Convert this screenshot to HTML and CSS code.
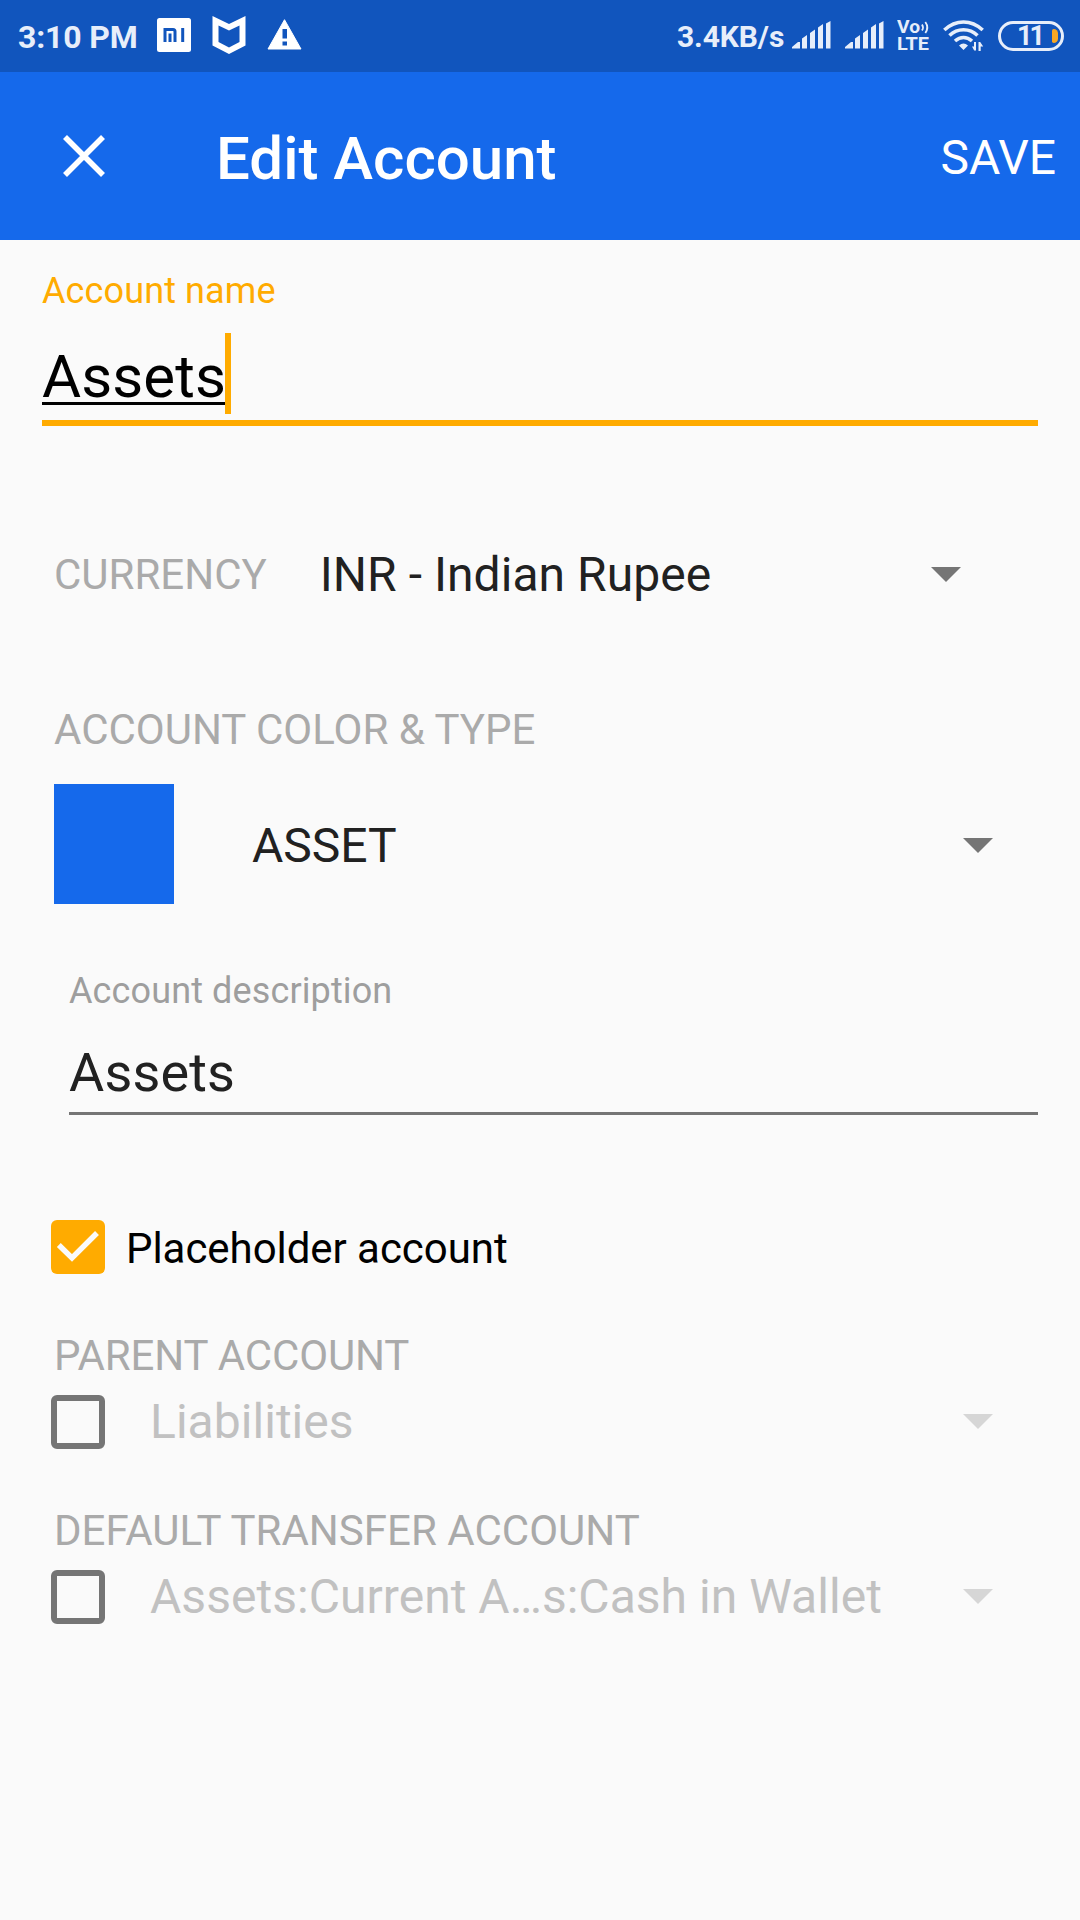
FILE: index.html
```html
<!DOCTYPE html>
<html lang="en">
<head>
<meta charset="utf-8">
<title>Edit Account</title>
<link rel="stylesheet" href="styles.css">
</head>
<body>
<div class="status">
  <span class="time">3:10 PM</span>
  <svg class="ic-mi" width="34" height="34" viewBox="0 0 34 34"><rect width="34" height="34" rx="2.5" fill="#fff"/><path d="M8 24V11.500h8q2 0 2 2V24M13 15.500V24M25.700 10v14" fill="none" stroke="#1155bd" stroke-width="3"/></svg>
  <svg class="ic-shield" width="34" height="39" viewBox="0 0 34 39"><path fill-rule="evenodd" fill="#fff" d="M.5 0 17 8 33.500 0v29.500L17 38 .500 29.500ZM6.500 9.500v16.500L17 31.500 27.500 26V9.500L17 14.500Z"/></svg>
  <svg class="ic-warn" width="35" height="31" viewBox="0 0 35 31"><path fill="#fff" stroke="#fff" stroke-width="1" stroke-linejoin="round" d="M17.500.700 34 30H1Z"/><path d="M15.500 10h4.500v9.500h-4.500zM15.500 22.500h4.500v4h-4.500z" fill="#1155bd"/></svg>
  <span class="rate">3.4KB/s</span>
  <svg class="ic-signal" width="39" height="28" viewBox="0 0 39 28"><path fill="#e7eefa" d="M0 27.500V26l6-5h2v6.500zM10 17.500l5-3.500v13.500h-5zM18 12l5-3.500v19h-5zM26 6.500 31 3v24.500h-5zM34 2.500 38.500 0v27.500H34z"/></svg>
  <svg class="ic-signal second" width="39" height="28" viewBox="0 0 39 28"><path fill="#e7eefa" d="M0 27.500V26l6-5h2v6.500zM10 17.500l5-3.500v13.500h-5zM18 12l5-3.500v19h-5zM26 6.500 31 3v24.500h-5zM34 2.500 38.500 0v27.500H34z"/></svg>
  <svg class="ic-volte" width="34" height="40" viewBox="0 0 34 40"><text x="0" y="19.300" textLength="23" lengthAdjust="spacingAndGlyphs">Vo</text><text x="0" y="35.700" textLength="32" lengthAdjust="spacingAndGlyphs">LTE</text><path d="M25 10.500q2 3 0 6M28.300 8q4 5.500 0 11" fill="none" stroke="#e7eefa" stroke-width="1.800"/></svg>
  <svg class="ic-wifi" width="42" height="33" viewBox="0 0 42 33"><g fill="none" stroke="#e7eefa" stroke-width="3.600"><path d="M1.300 11Q10 3 20.500 3T39.700 11"/><path d="M6.500 16.500Q12.500 10.800 20.500 10.800T34.500 16.500"/><path d="M12 22Q16 18.500 20.500 18.500T29 22"/></g><path fill="#e7eefa" d="M16 26.500q4.500-4 9 0L20.500 31zM33 23v8.500h-1.800l-2.200-4h2V23zM35.500 32v-9h1.700l3 4.500h-2.500V32z"/></svg>
  <div class="battery"><span class="level">11</span><i class="charge"></i></div>
</div>
<header class="bar">
  <svg class="close" width="44" height="44" viewBox="0 0 44 44"><path d="M3 3 41 41M41 3 3 41" stroke="#fff" stroke-width="5.600"/></svg>
  <h1 class="title">Edit Account</h1>
  <span class="save">SAVE</span>
</header>
<main class="form">
  <section class="field name">
    <div class="caption">Account name</div>
    <div class="input"><span class="typed">Assets<i class="cursor"></i></span></div>
  </section>
  <section class="row currency">
    <span class="label">CURRENCY</span><span class="value">INR - Indian Rupee</span><i class="arrow"></i>
  </section>
  <div class="label heading type-heading">ACCOUNT COLOR &amp; TYPE</div>
  <section class="row type">
    <i class="swatch"></i><span class="value">ASSET</span><i class="arrow"></i>
  </section>
  <section class="field description">
    <div class="caption">Account description</div>
    <div class="input">Assets</div>
  </section>
  <section class="row placeholder">
    <svg class="check" width="54" height="54" viewBox="0 0 54 54"><rect width="54" height="54" rx="6" fill="#ffab00"/><path d="M7.800 25 21 38 46 13" fill="none" stroke="#fafafa" stroke-width="5.500"/></svg>
    <span class="check-text">Placeholder account</span>
  </section>
  <div class="label heading parent-heading">PARENT ACCOUNT</div>
  <section class="row disabled">
    <i class="box"></i><span class="value">Liabilities</span><i class="arrow"></i>
  </section>
  <div class="label heading transfer-heading">DEFAULT TRANSFER ACCOUNT</div>
  <section class="row disabled">
    <i class="box"></i><span class="value">Assets:Current A…s:Cash in Wallet</span><i class="arrow"></i>
  </section>
</main>
</body>
</html>
```
FILE: styles.css
```css
* { box-sizing: border-box; }
body {
  margin: 0;
  min-height: 1920px;
  background: #fafafa;
  color: #212121;
  font-family: Roboto, sans-serif;
  font-size: 48px;
  white-space: nowrap;
}
svg { display: block; flex: none; }

/* status bar */
.status {
  display: flex;
  align-items: flex-start;
  height: 72px;
  padding-left: 18px;
  background: #1155bd;
  color: #e7eefa;
  font-weight: 700;
}
.time { width: 139px; font-size: 32px; line-height: 74px; letter-spacing: -0.150px; }
.ic-mi { margin-top: 18px; }
.ic-shield { margin: 16px 0 0 21px; }
.ic-warn { margin: 19px 0 0 21px; }
.rate { width: 115px; margin-left: 375px; font-size: 30px; line-height: 73px; letter-spacing: -0.100px; }
.ic-signal { margin-top: 21px; }
.ic-signal.second { margin-left: 14px; }
.ic-volte { margin: 14px 0 0 13px; font-size: 17.500px; fill: #e7eefa; }
.ic-wifi { margin: 19px 0 0 12px; }
.battery {
  display: flex;
  align-items: center;
  justify-content: flex-end;
  width: 66px;
  height: 30px;
  margin: 21px 0 0 13px;
  padding-right: 3px;
  border: 3px solid #e7eefa;
  border-radius: 15px;
}
.level { margin-right: 10px; font-size: 27px; line-height: 30px; letter-spacing: -3px; }
.charge { width: 6px; height: 14px; border-radius: 2px 5px 5px 2px; background: #f9a825; }

/* app bar */
.bar {
  display: flex;
  align-items: center;
  height: 168px;
  padding: 3px 24px 0 62px;
  background: #1569eb;
  color: #fff;
}
.close { margin-bottom: 3px; }
.title { margin: 2px 0 0 110px; font-size: 60px; line-height: 70px; font-weight: 500; }
.save { margin-left: auto; }

/* form */
.form { padding: 30px 42px 0; }
.caption { font-size: 36px; line-height: 42px; letter-spacing: 0.120px; }
.name .caption { color: #ffab00; }
.name .input {
  height: 114px;
  padding-top: 21px;
  border-bottom: 6px solid #ffab00;
  color: #000;
  font-size: 60px;
  line-height: 87px;
}
.typed {
  position: relative;
  display: inline-block;
  letter-spacing: 0.100px;
  text-decoration: underline 3px;
  text-underline-offset: 5px;
  text-decoration-skip-ink: none;
}
.cursor {
  position: absolute;
  right: -5px;
  top: 0;
  width: 6px;
  height: 81px;
  background: #ffab00;
}
.row { display: flex; align-items: center; }
.label { color: #aaa; font-size: 42px; }
.heading { height: 50px; margin-left: 12px; line-height: 50px; }
.arrow {
  width: 30px;
  height: 15px;
  margin-left: auto;
  background: #757575;
  clip-path: polygon(0 0, 100% 0, 50% 100%);
}
.currency { height: 145px; margin-top: 76px; padding: 0 77px 0 12px; }
.currency .value { margin-left: 53px; letter-spacing: 0.040px; }
.type-heading { margin-top: 58px; }
.type { margin-top: 29px; padding: 0 45px 0 12px; }
.swatch { width: 120px; height: 120px; background: #1569eb; }
.type .value { margin-left: 78px; padding-top: 3px; line-height: 58px; }
.type .arrow { margin-top: 3px; }
.description { margin: 66px 0 0 27px; }
.description .caption { color: #9e9e9e; }
.description .input {
  height: 103px;
  padding-top: 21px;
  border-bottom: 3px solid #757575;
  font-size: 54px;
  line-height: 79px;
  letter-spacing: 0.150px;
}
.placeholder { height: 54px; margin: 105px 0 0 9px; color: #000; font-size: 42px; }
.check-text { margin-left: 21px; padding-top: 3px; line-height: 56px; letter-spacing: -0.050px; }
.parent-heading { margin-top: 57px; letter-spacing: -0.150px; }
.transfer-heading { margin-top: 57px; letter-spacing: 0.020px; }
.disabled { height: 54px; margin-top: 14px; padding: 0 45px 0 9px; }
.box { width: 54px; height: 54px; border: 6px solid #757575; border-radius: 6px; }
.disabled .value { margin-left: 45px; padding-bottom: 2px; color: #c1c1c1; letter-spacing: 0.040px; }
.disabled .arrow { margin-bottom: 1px; background: #d6d6d6; }
```
